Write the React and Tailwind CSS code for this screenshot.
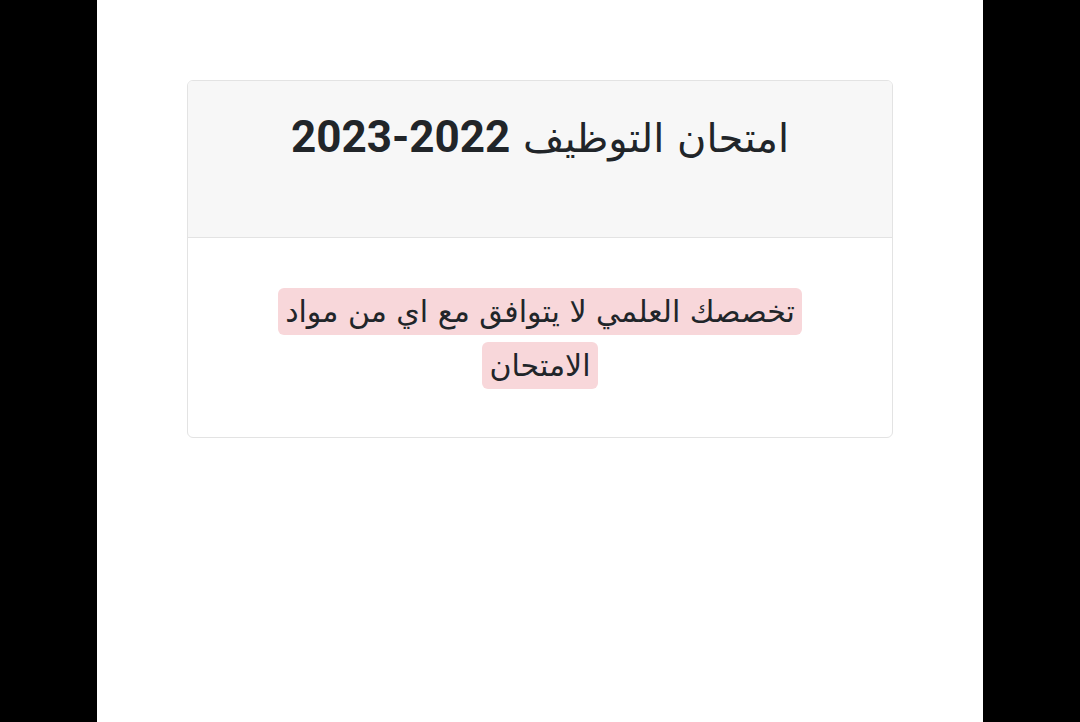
export default function App() {
  return (
    <div className="flex h-[722px] w-[1080px] bg-black" style={{ fontFamily: '"DejaVu Sans", sans-serif' }}>
      <div className="w-[97px] shrink-0 bg-black" />
      <div className="w-[886px] shrink-0 bg-white pt-[80px]">
        <div dir="rtl" className="mx-auto w-[706px] overflow-hidden rounded-md border border-[#e3e3e3] bg-white">
          <div className="h-[157px] border-b border-[#e3e3e3] bg-[#f7f7f7] pt-[28px] text-center">
            <h1 className="text-[40px] leading-[56px] text-[#212529]">
              امتحان التوظيف{' '}
              <b className="text-[44px] font-bold" style={{ fontFamily: 'Roboto, sans-serif' }}>2022-2023</b>
            </h1>
          </div>
          <div className="px-[78px] pb-[44px] pt-[47px] text-center">
            <p className="text-[30px] leading-[54px] text-[#212529]">
              <mark className="rounded-md bg-[#f8d7da] px-[7px] py-[6px] text-[#212529] [box-decoration-break:clone]">
                تخصصك العلمي لا يتوافق مع اي من مواد الامتحان
              </mark>
            </p>
          </div>
        </div>
      </div>
      <div className="w-[97px] shrink-0 bg-black" />
    </div>
  );
}
